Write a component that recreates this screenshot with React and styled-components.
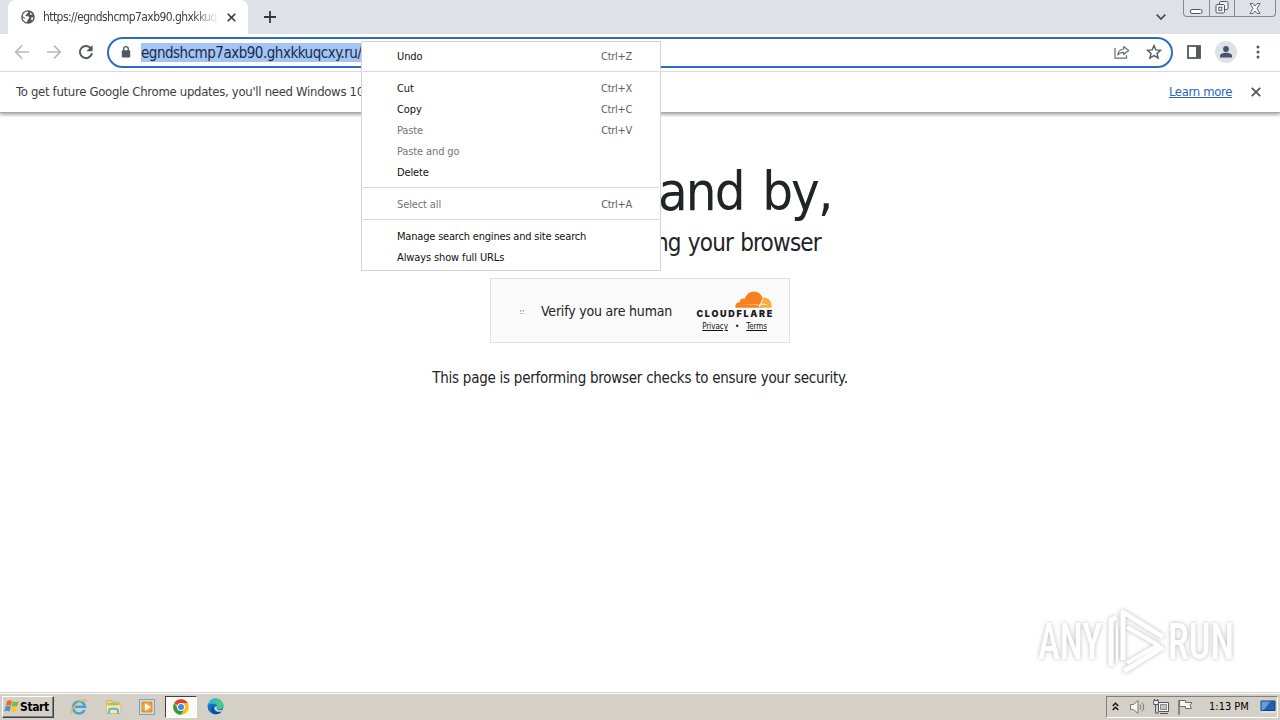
import React from 'react'
import styled, { createGlobalStyle, css } from 'styled-components'

const menuGroups = [
  [{ label: 'Undo', keys: 'Ctrl+Z' }],
  [
    { label: 'Cut', keys: 'Ctrl+X' },
    { label: 'Copy', keys: 'Ctrl+C' },
    { label: 'Paste', keys: 'Ctrl+V', disabled: true },
    { label: 'Paste and go', disabled: true },
    { label: 'Delete' },
  ],
  [{ label: 'Select all', keys: 'Ctrl+A', disabled: true }],
  [
    { label: 'Manage search engines and site search', spacing: -0.19 },
    { label: 'Always show full URLs' },
  ],
]

const GlobeIcon = () => (
  <svg width="14" height="14" viewBox="0 0 14 14">
    <circle cx="7" cy="7" r="6.8" fill="#54585d" />
    <path d="M6 1.600c1.600.2 1.400 1.200.4 1.700-1.200.6-.4 1.300-1.400 1.700-1 .3-.6 1.200.4 1.200 1.800 0 3 .3 2.800 1.600-.2 1.100-1.500 1.300-1.600 2.500-.1 1-.7 1.700-1.100 2C3.200 11.700 1.600 9.700 1.600 7.500l2.300 1.200c.8.2.2-1-.5-1.300L1.700 6.200C2 3.800 3.700 1.900 6 1.600z" fill="#fff" />
    <path d="M9.400 2.400l2.200 2-2 .3-.8-.9z M10.500 7.200l2 .3-1.300 3-1.200-1.300z" fill="#fff" />
  </svg>
)

const CrossIcon = ({ size = 9, color = '#34373b' }) => (
  <svg width={size} height={size} viewBox="0 0 9 9">
    <path d="M.7.7l7.600 7.600M8.300.7L.7 8.300" stroke={color} strokeWidth="1.600" />
  </svg>
)

const ArrowIcon = ({ right }) => (
  <svg width="16" height="16" viewBox="0 0 16 16" transform={right ? 'scale(-1 1)' : undefined}>
    <path d="M15 8H2M8 1.700L1.700 8 8 14.300" fill="none" stroke="#b9bbbe" strokeWidth="1.700" />
  </svg>
)

const ReloadIcon = () => (
  <svg width="16" height="16" viewBox="0 0 16 16">
    <path d="M13.200 4.800A6.100 6.100 0 1 0 14 9.200" fill="none" stroke="#54585d" strokeWidth="2" />
    <path d="M14.600 1v6.200H8.400z" fill="#54585d" />
  </svg>
)

const LockIcon = () => (
  <svg width="10" height="12" viewBox="0 0 10 12">
    <rect x=".8" y="4.300" width="8.400" height="7.200" rx="1" fill="#54585d" />
    <path d="M2.700 5V3a2.300 2.300 0 0 1 4.600 0v2" fill="none" stroke="#54585d" strokeWidth="1.300" />
  </svg>
)

const ShareIcon = () => (
  <svg width="16" height="16" viewBox="0 0 16 16" fill="none" stroke="#6a6d71" strokeWidth="1.200">
    <path d="M1 4v10.200h11.500v-3" />
    <path d="M9.700 2.500l5 4-5 4V8.300C7 8.200 5.200 9 3.800 11c.4-3.300 2.400-5.700 5.900-6z" strokeLinejoin="round" />
  </svg>
)

const StarIcon = () => (
  <svg width="16" height="16" viewBox="0 0 16 16">
    <path d="M8 1.600l1.850 4.350 4.750.4-3.600 3.150 1.100 4.600L8 11.650 3.900 14.100 5 9.500 1.400 6.350l4.750-.4z" fill="none" stroke="#54585d" strokeWidth="1.400" />
  </svg>
)

const PanelIcon = () => (
  <svg width="14" height="14" viewBox="0 0 14 14">
    <rect x="1" y="1" width="12" height="12" fill="#fff" stroke="#54585d" strokeWidth="1.800" />
    <rect x="9" y="1" width="4.500" height="12" fill="#54585d" />
  </svg>
)

const DotsIcon = () => (
  <svg width="4" height="14" viewBox="0 0 4 14" fill="#54585d">
    <circle cx="2" cy="2" r="1.500" />
    <circle cx="2" cy="7" r="1.500" />
    <circle cx="2" cy="12" r="1.500" />
  </svg>
)

const CloudIcon = () => (
  <svg width="37" height="18" viewBox="0 0 38 18">
    <path d="M29 6.500c4.800-.6 9 3.500 8.700 10.500H25z" fill="#f9ab41" />
    <path d="M.5 17C0 13.200 2 11.300 5 11.100 4.700 8.400 7.500 6.600 10 7.900 11.300 3.500 15 .3 19.300.3c4.700 0 8.400 3.200 9.200 7.500L26 17z" fill="#f6821f" />
    <path d="M7 14l18.500-.3L28 8l1.200.3-1.900 4.300 7 1.100-7.500.4-1.300 2.500-1.200-.3.700-1.800z" fill="#fff" opacity=".85" />
  </svg>
)

const WatermarkLogo = () => (
  <svg width="230" height="72" viewBox="0 0 230 72">
    <g fill="#fff" fontFamily="Roboto, sans-serif" fontSize="50" fontWeight="500">
      <text x="8" y="55" textLength="64" lengthAdjust="spacingAndGlyphs">ANY</text>
      <text x="138" y="55" textLength="66" lengthAdjust="spacingAndGlyphs">RUN</text>
    </g>
    <g fill="none" stroke="#fff" strokeWidth="5" strokeLinejoin="round">
      <path d="M81 62V16l6-3" />
      <path d="M87 58V22" strokeWidth="2" />
      <path d="M93 56V8l40 25" />
      <path d="M97 23l31 18-31 18" strokeWidth="4" />
      <path d="M94 67l39-24" />
    </g>
  </svg>
)

const StartFlag = () => (
  <svg width="16" height="15" viewBox="0 0 16 15">
    <path d="M3 2c2-1 3.500-.7 5 0L7 6.800c-1.800-.8-3.300-.8-5.200 0z" fill="#ed6b2d" />
    <path d="M8.700 2.300c1.900.8 3.700.8 6 0l-1.300 4.600c-1.900.8-3.700.8-5.700 0z" fill="#83b83b" />
    <path d="M1.600 7.600c1.900-.8 3.500-.7 5.200 0L5.600 12.400c-1.900-.8-3.400-.8-5.300 0z" fill="#4a91d1" />
    <path d="M7.500 7.900c1.900.8 3.700.8 5.700 0l-1.300 4.700c-1.900.8-3.700.7-5.700 0z" fill="#f7c736" />
  </svg>
)

const ExplorerIcon = () => (
  <svg width="18" height="18" viewBox="0 0 18 18">
    <path d="M14.500 12A6 6 0 1 1 15 8.700H5" fill="none" stroke="#43a4dc" strokeWidth="2.500" />
    <path d="M2 16c-3-2 2-9 8-12.500 4-2.300 7-2.400 6.300.6" fill="none" stroke="#e9bd43" strokeWidth="1.400" />
  </svg>
)

const FolderIcon = () => (
  <svg width="17" height="17" viewBox="0 0 17 17">
    <path d="M1.500 2.500h5l1 1.500h7v11h-13z" fill="#efd576" stroke="#c7a94d" strokeWidth=".7" />
    <path d="M3 5h10v3H3z" fill="#8fc37e" />
    <path d="M1 7h15l-.6 8.500H1.600z" fill="#f8e9a5" stroke="#d4b960" strokeWidth=".7" />
    <path d="M4 16v-3.500c0-2.500 9-2.500 9 0V16" fill="none" stroke="#6bb3dd" strokeWidth="2.200" />
  </svg>
)

const PlayerIcon = () => (
  <svg width="16" height="16" viewBox="0 0 16 16">
    <rect x=".6" y=".6" width="14.800" height="14.800" fill="#d3e7f6" stroke="#6f9cc2" />
    <rect x="2.500" y="2.500" width="11" height="11" rx="1" fill="#ef8a1d" />
    <circle cx="8" cy="8" r="4.600" fill="#f6a944" />
    <path d="M6 4.300v7.400L11.800 8z" fill="#fff" />
  </svg>
)

const ChromeIcon = () => (
  <svg width="16" height="16" viewBox="0 0 16 16">
    <circle cx="8" cy="8" r="7.800" fill="#fbc116" />
    <path d="M8 8L1.250 4.100A7.800 7.800 0 0 1 14.750 4.100L8 4.300z" fill="#e33b2e" />
    <path d="M1.250 4.100A7.800 7.800 0 0 0 8 15.800L11.300 10 4.700 9.800z" fill="#2a9d4a" />
    <circle cx="8" cy="8" r="3.900" fill="#fff" />
    <circle cx="8" cy="8" r="3" fill="#4285f4" />
  </svg>
)

const EdgeIcon = () => (
  <svg width="17" height="17" viewBox="0 0 17 17">
    <circle cx="8.500" cy="8.500" r="7.900" fill="#1470c4" />
    <path d="M.8 7.200C2 2.400 5.500.6 8.600.6c4.500 0 7.700 3.300 7.700 7 0 3-2.800 4-5.300 3.500-1.500-.3-.5-1.200-.5-2.500C10.500 6 5.500 4.500.8 7.200z" fill="#2fb8d5" />
    <path d="M10 .8c4.200.8 6.400 3.700 6.400 6.800 0 3-2.900 4-5.400 3.500-1.500-.3-.5-1.200-.5-2.500 0-1.500-1-2.800-3-3.500z" fill="#45c98a" />
    <path d="M6.300 8.500c-.5 4 3 6.500 8.300 5-3 4.300-10.500 3-10.500-2 0-1.600.9-2.700 2.200-3z" fill="#0c4c9c" />
    <path d="M10.400 8c-1.500 2-.6 4 2 4.300 1.200.1 2.300-.3 3.300-1l-.8 2c-4 1.500-8.500-.5-7.300-4.300z" fill="#d4d0c8" />
  </svg>
)

const SpeakerIcon = () => (
  <svg width="17" height="16" viewBox="0 0 17 16" stroke="#77777a" fill="none">
    <path d="M1.500 5.500h3L9 1.500v13l-4.500-4h-3z" fill="#f5f5f3" />
    <path d="M11 5.500q1.800 2.500 0 5M13 3.500q3.500 4.500 0 9" />
  </svg>
)

const NetworkIcon = () => (
  <svg width="17" height="16" viewBox="0 0 17 16" stroke="#55565a" fill="#f5f5f3">
    <path d="M5.500 3.500h10v9h-10z" />
    <path d="M7.500 5.500h6v5h-6z" fill="#c2c3c4" stroke="#88898b" />
    <path d="M7 14.500h8M2.500 5v9H6" fill="none" />
    <path d="M.7 1.500h4.600v4H.7z M1.500 1.500V0M4.500 1.500V0" />
  </svg>
)

const FlagIcon = () => (
  <svg width="16" height="16" viewBox="0 0 16 16" stroke="#6b6c6f" fill="#f5f5f3">
    <path d="M2 1v15" strokeWidth="1.400" />
    <path d="M2.500 1.500h6v2h6.500l-2 3 1.500 3h-6v-2h-6z" />
  </svg>
)

const DesktopIcon = () => (
  <svg width="16" height="14" viewBox="0 0 16 14">
    <path d="M1 1h14v9.500H1z" fill="#235fb1" stroke="#174178" />
    <path d="M1.500 1.500h9L4 10H1.500z" fill="#5d9de0" />
    <path d="M1 12h14" stroke="#e9f0f6" />
  </svg>
)

const App = () => (
  <>
    <GlobalStyle />
    <Screen>
      <TabStrip>
        <Tab>
          <GlobeIcon />
          <TabTitle>https://egndshcmp7axb90.ghxkkuqc</TabTitle>
          <CrossIcon />
        </Tab>
        <NewTab>
          <svg width="12" height="12" viewBox="0 0 12 12">
            <path d="M6 0v12M0 6h12" stroke="#34373b" strokeWidth="1.800" />
          </svg>
        </NewTab>
        <TabSearch>
          <svg width="10" height="6" viewBox="0 0 10 6">
            <path d="M.7.7L5 5 9.300.7" fill="none" stroke="#45484d" strokeWidth="1.700" />
          </svg>
        </TabSearch>
        <WindowButtons>
          <WindowButton $width={25}>
            <svg width="13" height="5" viewBox="0 0 13 5">
              <rect x=".5" y=".5" width="11.500" height="4" rx="1.500" fill="#fff" stroke="#565a60" />
            </svg>
          </WindowButton>
          <WindowButton $width={25}>
            <svg width="14" height="13" viewBox="0 0 14 13" fill="#f2f3f5" stroke="#565a60">
              <rect x="4.500" y=".5" width="8.500" height="8" rx="1.200" />
              <rect x="1" y="3.500" width="8.500" height="8.500" rx="1.200" />
              <rect x="3.800" y="6.300" width="3" height="3" />
            </svg>
          </WindowButton>
          <WindowButton $width={41}>
            <svg width="12" height="11" viewBox="0 0 12 11">
              <path d="M1 .5h3l2 2.500L8 .5h3L8 5.500l3 5H8L6 8l-2 2.500H1l3-5z" fill="#fafafa" stroke="#63666b" />
            </svg>
          </WindowButton>
        </WindowButtons>
      </TabStrip>

      <Toolbar>
        <NavButtons>
          <ArrowIcon />
          <ArrowIcon right />
          <ReloadIcon />
        </NavButtons>
        <Omnibox>
          <LockIcon />
          <Url>egndshcmp7axb90.ghxkkuqcxy.ru/</Url>
          <OmniboxActions>
            <ShareIcon />
            <StarIcon />
          </OmniboxActions>
        </Omnibox>
        <ToolbarActions>
          <PanelIcon />
          <Avatar>
            <svg width="12" height="12" viewBox="0 0 12 12" fill="#48536d">
              <circle cx="6" cy="3" r="2.900" />
              <path d="M0 11.500V10c0-2.200 3-3.200 6-3.200s6 1 6 3.200v1.500z" />
            </svg>
          </Avatar>
          <DotsIcon />
        </ToolbarActions>
      </Toolbar>

      <InfoBar>
        <InfoText>To get future Google Chrome updates, you'll need Windows 10</InfoText>
        <InfoLink>Learn more</InfoLink>
        <CrossIcon size={10} color="#54585d" />
      </InfoBar>

      <Page>
        <Title>Please stand by,</Title>
        <Subtitle>We are now checking your browser</Subtitle>
        <Challenge>
          <Spinner />
          <ChallengeLabel>Verify you are human</ChallengeLabel>
          <Brand>
            <CloudIcon />
            <BrandName>CLOUDFLARE</BrandName>
            <BrandLinks>
              <span>Privacy</span>
              <i>•</i>
              <span>Terms</span>
            </BrandLinks>
          </Brand>
        </Challenge>
        <Note>This page is performing browser checks to ensure your security.</Note>
      </Page>

      <Taskbar>
        <StartButton>
          <StartFlag />
          Start
        </StartButton>
        <Launcher>
          <Task><ExplorerIcon /></Task>
          <Task><FolderIcon /></Task>
          <Task><PlayerIcon /></Task>
          <Task $active><ChromeIcon /></Task>
          <Task><EdgeIcon /></Task>
        </Launcher>
        <Tray>
          <svg width="7" height="9" viewBox="0 0 7 9">
            <path d="M.7 4L3.500 1.200 6.300 4M.7 8l2.800-2.800L6.300 8" fill="none" stroke="#111" strokeWidth="1.400" />
          </svg>
          <TrayIcons>
            <SpeakerIcon />
            <NetworkIcon />
            <FlagIcon />
          </TrayIcons>
          <Clock>1:13 PM</Clock>
          <DesktopIcon />
        </Tray>
      </Taskbar>

      <Menu>
        {menuGroups.map((group, i) => (
          <MenuGroup key={i}>
            {group.map(item => (
              <MenuItem key={item.label} $disabled={item.disabled} $spacing={item.spacing}>
                <span>{item.label}</span>
                {item.keys && <Shortcut>{item.keys}</Shortcut>}
              </MenuItem>
            ))}
          </MenuGroup>
        ))}
      </Menu>

      <Watermark>
        <WatermarkLogo />
      </Watermark>
    </Screen>
  </>
)

const GlobalStyle = createGlobalStyle`
  * { box-sizing: border-box; }
  body {
    margin: 0;
    overflow: hidden;
    font-family: Tahoma, "DejaVu Sans Condensed", "DejaVu Sans", sans-serif;
    font-stretch: condensed;
  }
  svg { display: block; flex: none; }
`

const Screen = styled.div`
  position: relative;
  display: flex;
  flex-direction: column;
  width: 1280px;
  height: 720px;
  overflow: hidden;
  background: #fff;
`

const TabStrip = styled.div`
  display: flex;
  align-items: flex-start;
  height: 34px;
  background: #dee1e6;
`

const Tab = styled.div`
  display: flex;
  align-items: center;
  width: 240px;
  height: 34px;
  margin-left: 8px;
  padding: 0 12px 0 13px;
  background: #fff;
  border-radius: 7px 7px 0 0;
`

const TabTitle = styled.div`
  flex: none;
  width: 176px;
  margin: 0 8px;
  white-space: nowrap;
  color: #3c4043;
  font-size: 12px;
  letter-spacing: -0.57px;
  mask-image: linear-gradient(to right, #000 150px, transparent);
`

const NewTab = styled.div`
  padding: 11px 16px;
`

const TabSearch = styled.div`
  margin-left: auto;
  padding: 14px 17px 0 0;
`

const WindowButtons = styled.div`
  display: flex;
  height: 17px;
  margin-right: 4px;
  border: 1px solid #85888d;
  border-top: 0;
  border-radius: 0 0 4px 4px;
`

const WindowButton = styled.div`
  display: flex;
  align-items: flex-end;
  justify-content: center;
  width: ${({ $width }) => $width}px;
  padding-bottom: 2px;
  & + & { border-left: 1px solid #85888d; }
`

const Toolbar = styled.div`
  display: flex;
  align-items: center;
  height: 38px;
  padding-bottom: 1px;
  border-bottom: 1px solid #dcdddf;
`

const NavButtons = styled.div`
  display: flex;
  gap: 16px;
  width: 107px;
  padding-left: 14px;
`

const Omnibox = styled.div`
  display: flex;
  align-items: center;
  width: 1066px;
  height: 31px;
  padding: 0 9px 0 12px;
  border: 2px solid #2c6bc9;
  border-radius: 16px;
`

const Url = styled.div`
  height: 19px;
  margin-left: 10px;
  background: #a3c5f5;
  color: #1c2b45;
  font-size: 15px;
  line-height: 20px;
  letter-spacing: -0.49px;
`

const OmniboxActions = styled.div`
  display: flex;
  gap: 16px;
  margin-left: auto;
`

const ToolbarActions = styled.div`
  display: flex;
  align-items: center;
  padding-left: 14px;
`

const Avatar = styled.div`
  display: flex;
  align-items: center;
  justify-content: center;
  width: 22px;
  height: 22px;
  margin: 0 19px 0 14px;
  border-radius: 50%;
  background: #dee1e6;
`

const InfoBar = styled.div`
  display: flex;
  flex: none;
  align-items: center;
  height: 41px;
  padding: 0 19px 0 16px;
  border-bottom: 1px solid #a9a9a9;
  box-shadow: 0 2px 3px rgba(0, 0, 0, 0.32);
  font-size: 13px;
`

const InfoText = styled.div`
  padding-bottom: 2px;
  color: #3c4043;
  letter-spacing: -0.3px;
`

const InfoLink = styled.a`
  margin: 0 19px 0 auto;
  padding-bottom: 2px;
  color: #2b66c0;
  text-decoration: underline;
  letter-spacing: -0.35px;
`

const Page = styled.main`
  display: flex;
  flex: 1;
  flex-direction: column;
  align-items: center;
  padding-top: 46px;
  color: #222326;
  white-space: nowrap;
`

const Title = styled.h1`
  margin: 0;
  padding-left: 4px;
  font-size: 54px;
  font-weight: 400;
  line-height: 66px;
  letter-spacing: -1.9px;
  word-spacing: 5px;
`

const Subtitle = styled.h2`
  margin: 4px 0 20px;
  padding-left: 4px;
  font-size: 24px;
  font-weight: 400;
  line-height: 29px;
  letter-spacing: -0.8px;
  word-spacing: 1px;
`

const Challenge = styled.div`
  display: flex;
  align-items: center;
  width: 300px;
  height: 65px;
  padding: 0 17px 0 29px;
  border: 1px solid #e0e0e0;
  background: #fafafa;
`

const Spinner = styled.i`
  width: 4px;
  height: 4px;
  margin-top: 3px;
  border: 1px dotted #b5b5b5;
`

const ChallengeLabel = styled.div`
  margin-left: 17px;
  font-size: 14px;
  letter-spacing: -0.2px;
`

const Brand = styled.div`
  display: flex;
  flex-direction: column;
  align-items: flex-end;
  width: 77px;
  margin-left: auto;
  padding-top: 2px;
`

const BrandName = styled.div`
  height: 9px;
  color: #1c1c1e;
  font-family: Inter, sans-serif;
  font-size: 9px;
  font-weight: 900;
  line-height: 10px;
  letter-spacing: 1.7px;
  margin-right: -2px;
`

const BrandLinks = styled.div`
  display: flex;
  gap: 7px;
  margin: 4px 5px 0 0;
  color: #111;
  font-size: 8px;
  line-height: 10px;
  letter-spacing: -0.05px;
  span { text-decoration: underline; }
  i { font-style: normal; }
`

const Note = styled.p`
  margin: 25px 0 0;
  font-size: 15px;
  line-height: 20px;
  letter-spacing: -0.26px;
`

const Menu = styled.div`
  position: absolute;
  top: 41px;
  left: 361px;
  width: 300px;
  height: 230px;
  padding: 4px 1px 0;
  border: 1px solid #d4d4d4;
  background: #fff;
`

const MenuGroup = styled.div`
  & + & {
    margin-top: 4px;
    padding-top: 6px;
    border-top: 1px solid #d9d9d9;
  }
`

const MenuItem = styled.div`
  display: flex;
  align-items: center;
  justify-content: space-between;
  height: 21px;
  padding: 0 27px 0 34px;
  color: #111;
  font-size: 11px;
  letter-spacing: ${({ $spacing }) => $spacing ?? -0.12}px;
  ${({ $disabled }) => $disabled && css`
    color: #757575;
  `}
`

const Shortcut = styled.span`
  color: #606060;
  letter-spacing: -0.3px;
`

const Taskbar = styled.footer`
  display: flex;
  align-items: center;
  height: 28px;
  padding: 0 2px;
  border-top: 1px solid #d4d0c8;
  background: #d4d0c8;
  box-shadow: inset 0 1px #fff;
`

const StartButton = styled.div`
  display: flex;
  align-items: center;
  width: 52px;
  height: 22px;
  padding-left: 1px;
  border: 1px solid;
  border-color: #fff #404040 #404040 #fff;
  box-shadow: inset -1px -1px #808080;
  color: #000;
  font-size: 12px;
  font-weight: 700;
  letter-spacing: -0.4px;
`

const Launcher = styled.div`
  display: flex;
  gap: 2px;
  margin-left: 9px;
`

const Task = styled.div`
  display: flex;
  align-items: center;
  justify-content: center;
  width: 32px;
  height: 22px;
  ${({ $active }) => $active && css`
    border: 1px solid;
    border-color: #404040 #fff #fff #404040;
    background: #fbfaf9;
  `}
`

const Tray = styled.div`
  display: flex;
  align-items: center;
  width: 172px;
  height: 22px;
  margin-left: auto;
  padding: 0 0 0 5px;
  border: 1px solid;
  border-color: #808080 #fff #fff #808080;
`

const TrayIcons = styled.div`
  display: flex;
  gap: 7px;
  margin-left: 10px;
`

const Clock = styled.div`
  width: 42px;
  margin: 0 9px 0 16px;
  color: #000;
  font-size: 11px;
  letter-spacing: 0;
  white-space: nowrap;
`

const Watermark = styled.div`
  position: absolute;
  top: 604px;
  left: 1030px;
  filter: drop-shadow(0 0 2px rgba(0, 0, 0, 0.28));
`

export default App
